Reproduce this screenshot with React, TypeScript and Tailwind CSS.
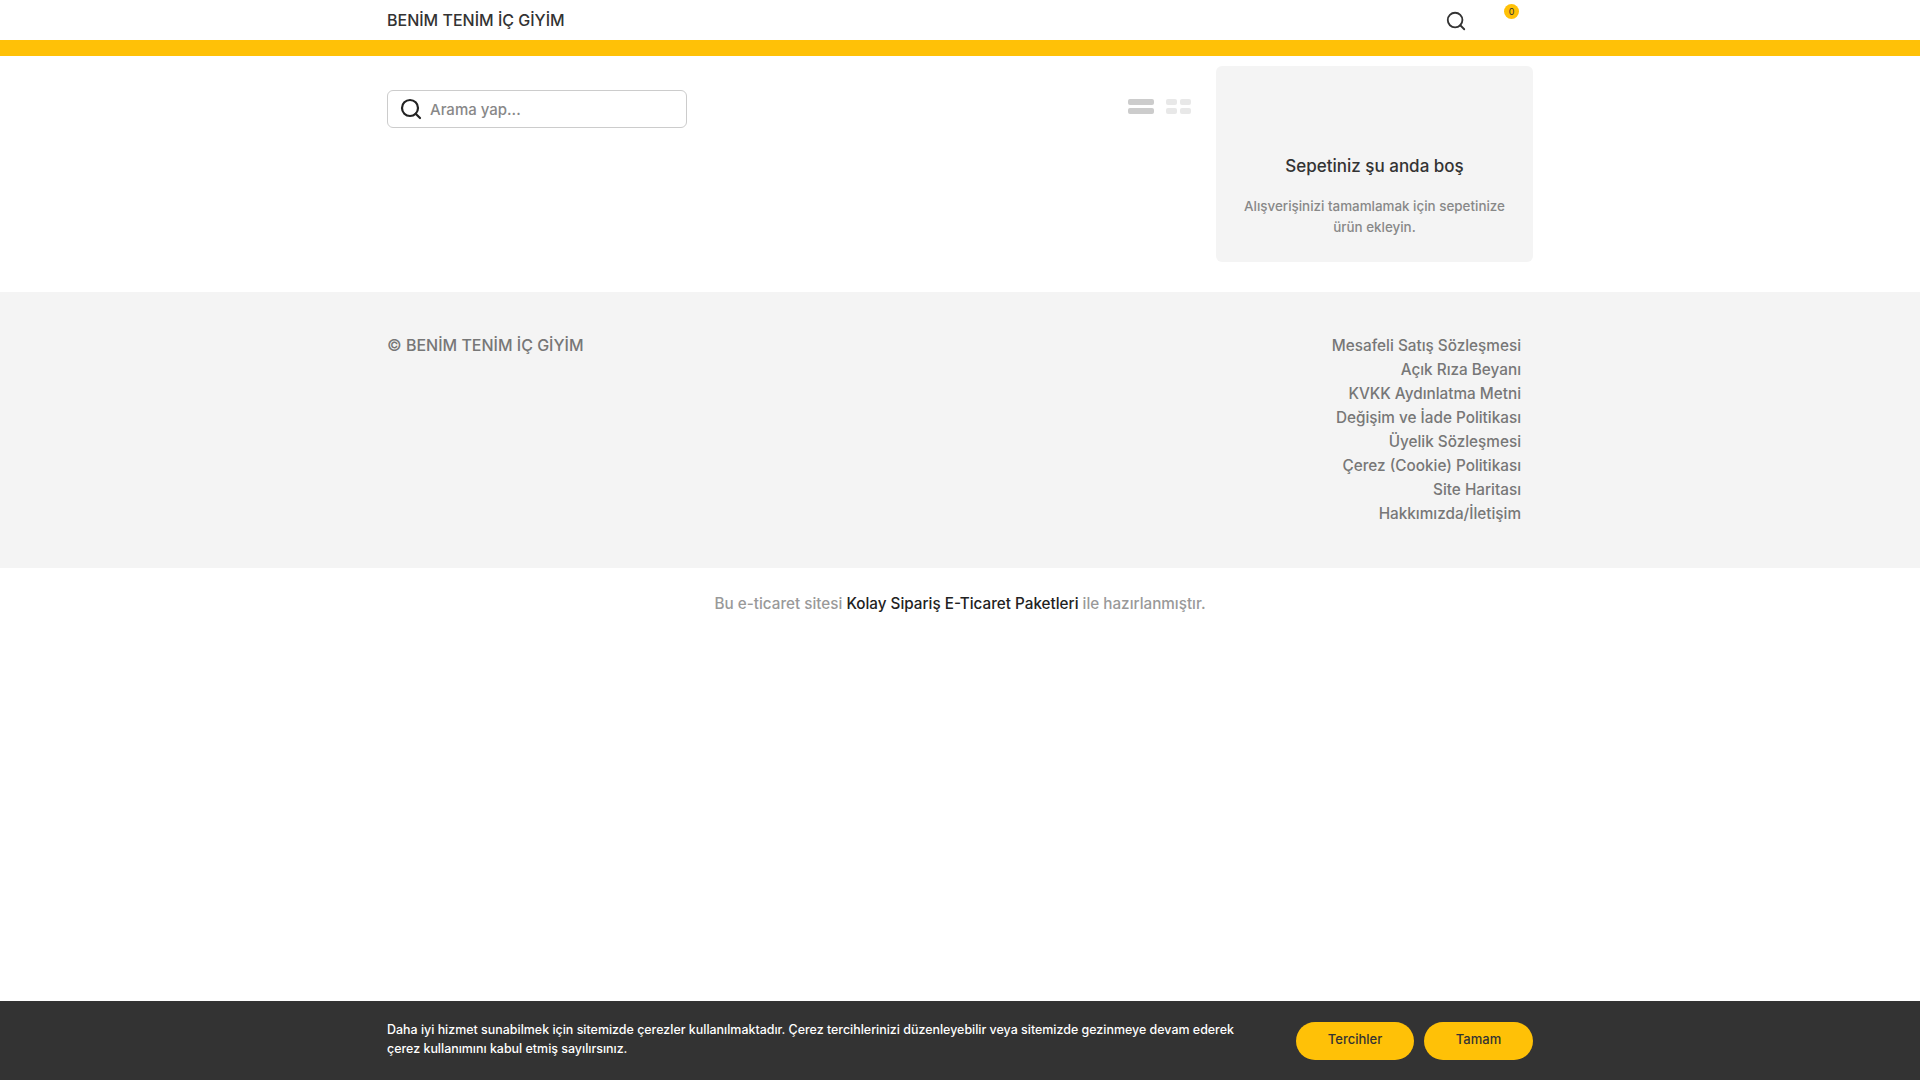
import { Search } from "lucide-react"

const footerLinks = [
  "Mesafeli Satış Sözleşmesi",
  "Açık Rıza Beyanı",
  "KVKK Aydınlatma Metni",
  "Değişim ve İade Politikası",
  "Üyelik Sözleşmesi",
  "Çerez (Cookie) Politikası",
  "Site Haritası",
  "Hakkımızda/İletişim",
]

function ListViewIcon() {
  return (
    <div className="flex w-[26px] flex-col gap-[3px]">
      <div className="h-[6px] rounded-[2px] bg-[#cccccc]" />
      <div className="h-[6px] rounded-[2px] bg-[#cccccc]" />
    </div>
  )
}

function GridViewIcon() {
  return (
    <div className="grid w-[25px] grid-cols-2 gap-x-[3px] gap-y-[3px]">
      <div className="h-[6px] rounded-[2px] bg-[#e8e8e8]" />
      <div className="h-[6px] rounded-[2px] bg-[#e8e8e8]" />
      <div className="h-[6px] rounded-[2px] bg-[#e8e8e8]" />
      <div className="h-[6px] rounded-[2px] bg-[#e8e8e8]" />
    </div>
  )
}

export default function App() {
  return (
    <div className="flex min-h-[1080px] flex-col bg-white font-['Inter',sans-serif] text-[#333333]">
      <header className="h-10 bg-white">
        <div className="mx-auto flex h-10 w-[1146px] items-center">
          <a className="pb-[1px] text-[16px] font-medium text-[#333333]">BENİM TENİM İÇ GİYİM</a>
          <div className="ml-auto flex items-center">
            <Search className="mt-[1px] h-[22px] w-[22px] text-[#333333]" strokeWidth={2} />
            <div className="relative ml-[37px] mr-[14px] h-10 w-[15px]">
              <span className="absolute left-0 top-[4px] flex h-[15px] w-[15px] items-center justify-center rounded-full bg-[#ffc107] text-[9px] text-[#333333]">
                0
              </span>
            </div>
          </div>
        </div>
      </header>
      <div className="h-4 bg-[#ffc107]" />

      <main className="mx-auto flex w-[1146px] items-start justify-between pb-[30px] pt-[10px]">
        <div className="flex w-[804px] items-start justify-between pt-[24px]">
          <div className="flex h-[38px] w-[300px] items-center rounded-[6px] border border-[#cccccc] pl-[11px]">
            <Search className="h-[24px] w-[24px] text-[#222222]" strokeWidth={2.2} />
            <span className="ml-[7px] pt-[2px] text-[15px] font-medium text-[#888888]">Arama yap...</span>
          </div>
          <div className="flex items-center gap-[12px] pt-[9px]">
            <ListViewIcon />
            <GridViewIcon />
          </div>
        </div>
        <aside className="w-[317px] rounded-[6px] bg-[#f4f4f4] px-5 pb-[24px] pt-[88px] text-center">
          <h3 className="text-[17px] font-medium leading-[24px] text-[#333333]">Sepetiniz şu anda boş</h3>
          <p className="mt-[18px] text-[13.4px] font-medium leading-[21px] text-[#888888]">
            Alışverişinizi tamamlamak için sepetinize ürün ekleyin.
          </p>
        </aside>
      </main>

      <footer className="bg-[#f4f4f4] pb-[42px] pt-[42px]">
        <div className="mx-auto flex w-[1146px] items-start justify-between pr-[12px]">
          <span className="text-[16px] font-medium leading-[23px] text-[#777777]">© BENİM TENİM İÇ GİYİM</span>
          <ul className="text-right">
            {footerLinks.map((link) => (
              <li key={link} className="text-[15.3px] font-medium leading-[24px] text-[#777777]">
                {link}
              </li>
            ))}
          </ul>
        </div>
      </footer>

      <div className="pt-[24px] text-center text-[15.25px] font-medium leading-[24px] text-[#999999]">
        Bu e-ticaret sitesi <a className="text-[#222222]">Kolay Sipariş E-Ticaret Paketleri</a> ile hazırlanmıştır.
      </div>

      <div className="mt-auto bg-[#333333]">
        <div className="mx-auto flex h-[79px] w-[1146px] items-center justify-between">
          <p className="w-[860px] pb-[2px] text-[12.45px] font-medium leading-[18.5px] text-white">
            Daha iyi hizmet sunabilmek için sitemizde çerezler kullanılmaktadır. Çerez tercihlerinizi düzenleyebilir veya sitemizde gezinmeye devam ederek çerez kullanımını kabul etmiş sayılırsınız.
          </p>
          <div className="flex gap-[10px]">
            <button className="h-[38px] w-[118px] rounded-full bg-[#ffc107] pb-[2px] text-[13px] font-medium text-[#333333]">Tercihler</button>
            <button className="h-[38px] w-[109px] rounded-full bg-[#ffc107] pb-[2px] text-[13px] font-medium text-[#333333]">Tamam</button>
          </div>
        </div>
      </div>
    </div>
  )
}
